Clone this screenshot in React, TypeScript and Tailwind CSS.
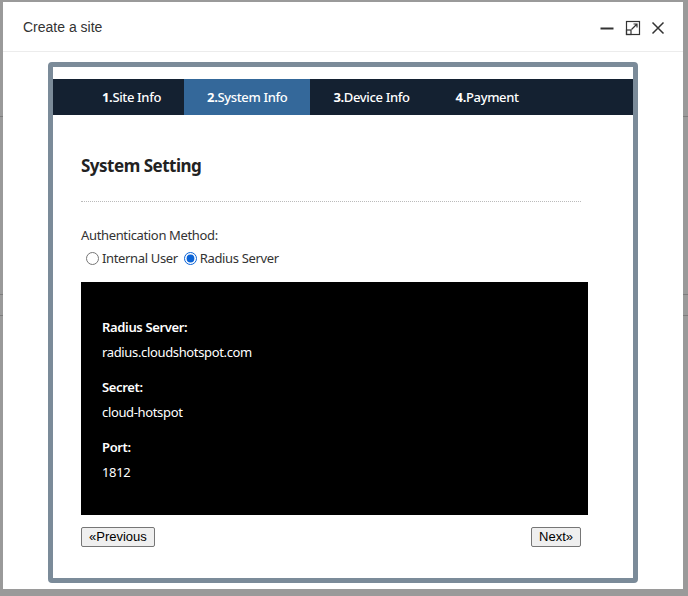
import { useState } from 'react';

const tabs = [
  { num: '1.', label: 'Site Info' },
  { num: '2.', label: 'System Info' },
  { num: '3.', label: 'Device Info' },
  { num: '4.', label: 'Payment' },
];

const radius = [
  { label: 'Radius Server:', value: 'radius.cloudshotspot.com' },
  { label: 'Secret:', value: 'cloud-hotspot' },
  { label: 'Port:', value: '1812' },
];

function WindowIcons() {
  return (
    <div className="flex items-center text-[#333]">
      <svg width="14" height="14" viewBox="0 0 14 14">
        <line x1="0.5" y1="7.5" x2="13.5" y2="7.5" stroke="currentColor" strokeWidth="2" />
      </svg>
      <svg className="ml-[11px]" width="16" height="16" viewBox="0 0 16 16" fill="none" stroke="currentColor" strokeWidth="1.2">
        <rect x="1.5" y="1.5" width="13" height="13" />
        <rect x="1.5" y="10" width="4.5" height="4.5" />
        <path d="M6.5 9.5 L12 4 M8.5 4 H12 V7.5" />
      </svg>
      <svg className="ml-[10px]" width="14" height="14" viewBox="0 0 14 14" fill="none" stroke="currentColor" strokeWidth="1.5">
        <path d="M1.5 1.5 L12.5 12.5 M12.5 1.5 L1.5 12.5" />
      </svg>
    </div>
  );
}

export default function App() {
  const [method, setMethod] = useState('radius');
  const active = 1;

  return (
    <div className="relative h-[596px] w-[688px] overflow-hidden bg-[#9a9a9a] pt-[2px] pl-[3px]">
      {/* page lines behind the overlay */}
      <div className="absolute left-0 top-[116px] h-px w-full bg-[#7d7d7d]" />
      <div className="absolute left-0 top-[294px] h-px w-full bg-[#7d7d7d]" />
      <div className="absolute left-0 top-[315px] h-px w-full bg-[#7d7d7d]" />

      <div className="relative flex h-[587px] w-[680px] flex-col bg-white">
        <div className="flex h-[50px] shrink-0 items-center justify-between border-b border-[#ececec] pt-[2px] pl-[20px] pr-[18px]">
          <span className="text-[14px] text-[#333] [font-family:'Liberation_Sans',Arial,sans-serif]">Create a site</span>
          <WindowIcons />
        </div>

        <div className="ml-[45px] mt-[10px] h-[521px] w-[590px] rounded-[4px] border-[5px] border-[#7b8b99] pt-[12px] tracking-[-0.35px] [font-family:'Noto_Sans','Open_Sans',sans-serif]">
          <div className="flex h-[36px] bg-[#142131] pl-[26px] text-[13px] text-white">
            {tabs.map((t, i) => (
              <div
                key={t.num}
                className={`flex items-center px-[23px] pt-[2px] ${i === active ? 'bg-[#34689a]' : ''}`}
              >
                <span className="font-bold">{t.num}</span>
                <span className="font-medium">{t.label}</span>
              </div>
            ))}
          </div>

          <div className="ml-[28px] w-[500px]">
            <h2 className="mt-[39px] text-[17px] leading-[24px] font-bold tracking-[-0.5px] text-[#222]">System Setting</h2>
            <div className="mt-[23px] border-b border-dotted border-[#bbb]" />

            <div className="mt-[24px] text-[13px] leading-[18px] text-[#333]">Authentication Method:</div>
            <div className="mt-[5px] flex items-center text-[13px] leading-[18px] text-[#333]">
              <label className="flex items-center">
                <input
                  type="radio"
                  name="auth"
                  className="m-0 ml-[5px] mr-[3px] h-[13px] w-[13px] accent-[#0b63d6]"
                  checked={method === 'internal'}
                  onChange={() => setMethod('internal')}
                />
                Internal User
              </label>
              <label className="ml-[6px] flex items-center">
                <input
                  type="radio"
                  name="auth"
                  className="m-0 mr-[3px] h-[13px] w-[13px] accent-[#0b63d6]"
                  checked={method === 'radius'}
                  onChange={() => setMethod('radius')}
                />
                Radius Server
              </label>
            </div>

            <div className="mt-[15px] h-[233px] w-[507px] bg-black pl-[21px] pt-[36px] text-[13px] leading-[18px] text-white">
              {radius.map((r, i) => (
                <div key={r.label} className={i > 0 ? 'mt-[17px]' : ''}>
                  <div className="font-semibold">{r.label}</div>
                  <div className="mt-[7px]">{r.value}</div>
                </div>
              ))}
            </div>

            <div className="mt-[12px] flex justify-between text-[13px] tracking-normal [font-family:'Liberation_Sans',Arial,sans-serif]">
              <button className="h-[20px] rounded-[2px] border border-[#767676] bg-[#efefef] px-[7px] leading-[18px] text-black">«Previous</button>
              <button className="h-[20px] rounded-[2px] border border-[#767676] bg-[#efefef] px-[7px] leading-[18px] text-black">Next»</button>
            </div>
          </div>
        </div>
      </div>
    </div>
  );
}
